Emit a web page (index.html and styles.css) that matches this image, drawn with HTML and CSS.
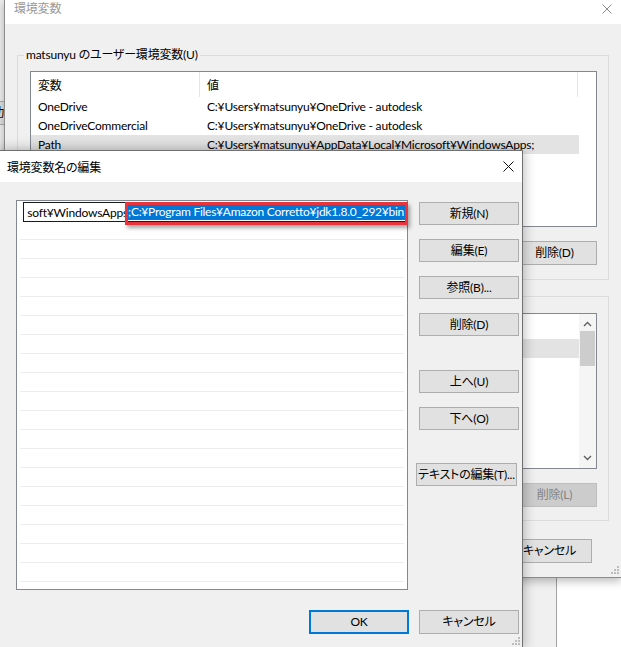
FILE: index.html
```html
<!DOCTYPE html>
<html lang="ja">
<head>
<meta charset="utf-8">
<title>環境変数名の編集</title>
<link rel="stylesheet" href="styles.css">
</head>
<body>
<div class="screen">
  <div class="behind">
    <div class="behind-btn">初功</div>
  </div>

  <div class="win envwin">
    <div class="titlebar inactive">
      <span class="title">環境変数</span>
      <svg class="close" width="10" height="10" viewBox="0 0 10 10"><path d="M0.5 0.5 L9.5 9.5 M9.5 0.5 L0.5 9.5" stroke="#8c8c8c" stroke-width="1" fill="none"/></svg>
    </div>
    <div class="envbody">
      <div class="group g1">
        <span class="legend">matsunyu のユーザー環境変数(U)</span>
        <div class="listview">
          <div class="lv-main">
            <div class="lv-head">
              <span class="c1">変数</span><span class="c2">値</span><span class="c3"></span>
            </div>
            <div class="lv-row"><span class="c1">OneDrive</span><span class="c2">C:¥Users¥matsunyu¥OneDrive - autodesk</span></div>
            <div class="lv-row"><span class="c1">OneDriveCommercial</span><span class="c2">C:¥Users¥matsunyu¥OneDrive - autodesk</span></div>
            <div class="lv-row sel"><span class="c1">Path</span><span class="c2">C:¥Users¥matsunyu¥AppData¥Local¥Microsoft¥WindowsApps;</span></div>
            <div class="lv-row"><span class="c1">TEMP</span><span class="c2">C:¥Users¥matsunyu¥AppData¥Local¥Temp</span></div>
            <div class="lv-row"><span class="c1">TMP</span><span class="c2">C:¥Users¥matsunyu¥AppData¥Local¥Temp</span></div>
          </div>
        </div>
        <div class="btnrow">
          <button class="btn">新規(N)...</button>
          <button class="btn">編集(E)...</button>
          <button class="btn">削除(D)</button>
        </div>
      </div>

      <div class="group g2">
        <span class="legend">システム環境変数(S)</span>
        <div class="listview lv2">
          <div class="lv-main">
            <div class="lv-head">
              <span class="c1">変数</span><span class="c2">値</span>
            </div>
            <div class="lv-row sel"><span class="c1">ComSpec</span><span class="c2">C:¥WINDOWS¥system32¥cmd.exe</span></div>
            <div class="lv-row"><span class="c1">DriverData</span><span class="c2">C:¥Windows¥System32¥Drivers¥DriverData</span></div>
          </div>
          <div class="vscroll">
            <svg class="arrow" width="9" height="6" viewBox="0 0 9 6"><path d="M1 5 L4.5 1.5 L8 5" stroke="#606060" stroke-width="1.4" fill="none"/></svg>
            <div class="track"><div class="thumb"></div></div>
            <svg class="arrow" width="9" height="6" viewBox="0 0 9 6"><path d="M1 1 L4.5 4.5 L8 1" stroke="#606060" stroke-width="1.4" fill="none"/></svg>
          </div>
        </div>
        <div class="btnrow">
          <button class="btn">新規(W)...</button>
          <button class="btn">編集(I)...</button>
          <button class="btn disabled">削除(L)</button>
        </div>
      </div>

      <div class="envfooter">
        <button class="btn">OK</button>
        <button class="btn">キャンセル</button>
      </div>
    </div>
    <svg class="grip" width="9" height="9" viewBox="0 0 9 9" fill="#bdbdbd"><rect x="7" y="1" width="2" height="2"/><rect x="4" y="4" width="2" height="2"/><rect x="7" y="4" width="2" height="2"/><rect x="1" y="7" width="2" height="2"/><rect x="4" y="7" width="2" height="2"/><rect x="7" y="7" width="2" height="2"/></svg>
  </div>

  <div class="win editwin">
    <div class="titlebar">
      <span class="title">環境変数名の編集</span>
      <svg class="close" width="11" height="11" viewBox="0 0 11 11"><path d="M0.5 0.5 L10.5 10.5 M10.5 0.5 L0.5 10.5" stroke="#111" stroke-width="1" fill="none"/></svg>
    </div>
    <div class="editbody">
      <div class="editmain">
        <div class="editlist">
          <div class="rows">
            <div class="erow first">
              <div class="editbox">
                <span class="pre"><span>soft¥WindowsApps</span></span><span class="selected">;C:¥Program Files¥Amazon Corretto¥jdk1.8.0_292¥bin</span>
              </div>
            </div>
            <div class="erow"></div><div class="erow"></div><div class="erow"></div><div class="erow"></div>
            <div class="erow"></div><div class="erow"></div><div class="erow"></div><div class="erow"></div>
            <div class="erow"></div><div class="erow"></div><div class="erow"></div><div class="erow"></div>
            <div class="erow"></div><div class="erow"></div><div class="erow"></div><div class="erow"></div>
            <div class="erow"></div><div class="erow"></div><div class="erow"></div><div class="erow"></div>
          </div>
          <div class="highlight"></div>
        </div>
        <div class="sidebtns">
          <button class="btn">新規(N)</button>
          <button class="btn">編集(E)</button>
          <button class="btn">参照(B)...</button>
          <button class="btn">削除(D)</button>
          <button class="btn gap-big">上へ(U)</button>
          <button class="btn">下へ(O)</button>
          <button class="btn gap-big wide">テキストの編集(T)...</button>
        </div>
      </div>
      <div class="editfooter">
        <button class="btn default">OK</button>
        <button class="btn">キャンセル</button>
      </div>
    </div>
    <svg class="grip" width="9" height="9" viewBox="0 0 9 9" fill="#bdbdbd"><rect x="7" y="1" width="2" height="2"/><rect x="4" y="4" width="2" height="2"/><rect x="7" y="4" width="2" height="2"/><rect x="1" y="7" width="2" height="2"/><rect x="4" y="7" width="2" height="2"/><rect x="7" y="7" width="2" height="2"/></svg>
  </div>
</div>
</body>
</html>
```

FILE: styles.css
```css
* { box-sizing: border-box; }
html, body { margin: 0; padding: 0; }
body {
  width: 621px;
  height: 647px;
  overflow: hidden;
  background: #fff;
  font-family: Lato, "Noto Sans CJK JP", sans-serif;
  font-feature-settings: "palt" 1;
  font-size: 12px;
  letter-spacing: -0.2px;
  color: #000;
}
.screen {
  position: relative;
  width: 621px;
  height: 647px;
  overflow: hidden;
  background: #fff;
}

/* window far behind */
.behind {
  position: absolute;
  left: -60px;
  top: -10px;
  width: 617px;
  height: 700px;
  background: #f0f0f0;
  border-right: 1px solid #a3a3a3;
  padding: 111px 0 0 20px;
}
.behind-btn {
  width: 45px;
  height: 24px;
  border: 1px solid #adadad;
  background: #e1e1e1;
  text-align: right;
  line-height: 22px;
  white-space: nowrap;
  overflow: hidden;
  margin-right: -4px;
  direction: rtl;
}

/* generic window */
.win {
  position: absolute;
  display: flex;
  flex-direction: column;
  background: #f0f0f0;
}
.titlebar {
  display: flex;
  align-items: center;
  justify-content: space-between;
  background: #fff;
  flex: none;
}
.titlebar .title { white-space: nowrap; }
.titlebar.inactive .title { color: #9a9a9a; }

.btn {
  font: inherit;
  font-feature-settings: "palt" 1;
  letter-spacing: -0.2px;
  color: #000;
  background: #e1e1e1;
  border: 1px solid #adadad;
  border-radius: 0;
  padding: 0;
  margin: 0;
  text-align: center;
  white-space: nowrap;
  line-height: 1;
}
.btn.disabled {
  background: #cccccc;
  border-color: #bfbfbf;
  color: #838383;
}

.grip {
  position: absolute;
  right: 2px;
  bottom: 3px;
}

/* background: 環境変数 */
.envwin {
  left: 4px;
  top: -1px;
  width: 618px;
  height: 579px;
  border: 1px solid #8c8c8c;
  box-shadow: 0 3px 9px rgba(0, 0, 0, 0.28);
}
.envwin .titlebar {
  height: 24px;
  padding: 0 9px 6px 9px;
  line-height: 14px;
}
.envbody {
  display: flex;
  flex-direction: column;
  padding: 31px 12px 0 12px;
}
.group {
  display: flex;
  flex-direction: column;
  border: 1px solid #dcdcdc;
  padding: 0 11px 14px 12px;
}
.group.g2 { margin-top: 16px; padding-bottom: 13px; }
.legend {
  align-self: flex-start;
  margin: -9px 0 0 -6px;
  padding: 0 2px;
  height: 16px;
  line-height: 16px;
  background: #f0f0f0;
  white-space: nowrap;
}
.listview {
  margin-top: 8px;
  height: 156px;
  border: 1px solid #828790;
  background: #fff;
  display: flex;
  overflow: hidden;
}
.g2 .listview { margin-top: 9px; }
.lv-main { flex: 1; min-width: 0; }
.lv-head {
  display: flex;
  height: 25px;
  align-items: stretch;
}
.lv-head span {
  display: flex;
  align-items: center;
  padding-left: 7px;
}
.lv-head .c1 { width: 169px; border-right: 1px solid #e5e5e5; }
.lv-head .c2 { width: 378px; border-right: 1px solid #e5e5e5; }
.lv-head .c3 { flex: 1; }
.lv-row {
  display: flex;
  align-items: center;
  height: 19px;
  width: 548px;
  white-space: nowrap;
}
.lv-row .c1 { width: 169px; padding-left: 7px; flex: none; }
.lv-row .c2 { padding-left: 7px; }
.lv-row.sel { background: #e3e3e3; }
.lv2 .lv-row { width: auto; }
.lv2 .lv-head .c2 { flex: 1; width: auto; border-right: none; }

.vscroll {
  width: 17px;
  flex: none;
  display: flex;
  flex-direction: column;
  align-items: center;
  background: #f5f5f5;
  padding: 7px 0 7px;
}
.vscroll .track {
  flex: 1;
  width: 100%;
  padding-top: 4px;
}
.vscroll .thumb {
  height: 35px;
  background: #cdcdcd;
  margin: 0 1px;
}

.btnrow {
  display: flex;
  justify-content: flex-end;
  gap: 10px;
  margin-top: 14px;
}
.btnrow .btn { width: 85px; height: 24px; }
.envfooter {
  display: flex;
  justify-content: flex-end;
  gap: 10px;
  margin-top: 18px;
  padding-right: 17px;
}
.envfooter .btn { width: 85px; height: 24px; }

/* foreground: 環境変数名の編集 */
.editwin {
  left: -1px;
  top: 150px;
  width: 524px;
  height: 499px;
  border: 1px solid #707070;
  box-shadow: 0 0 12px rgba(0, 0, 0, 0.32);
}
.editwin .titlebar {
  height: 31px;
  padding: 0 8px 0 7px;
}
.editbody {
  padding: 18px 3px 0 16px;
  display: flex;
  flex-direction: column;
}
.editmain {
  display: flex;
  gap: 11px;
  align-items: flex-start;
}
.editlist {
  position: relative;
  width: 392px;
  height: 390px;
  border: 1px solid #828790;
  background: #fff;
  flex: none;
}
.rows {
  height: 100%;
  overflow: hidden;
  padding-top: 1px;
}
.erow {
  height: 19px;
  margin: 0 3px;
  border-bottom: 1px solid #ececec;
}
.erow.first {
  border-bottom-color: #fff;
  padding-left: 3px;
}
.editbox {
  height: 20px;
  width: 384px;
  border: 1px solid #1a1a1a;
  background: #fff;
  display: flex;
  align-items: center;
  overflow: hidden;
  white-space: nowrap;
  padding-left: 1px;
}
.editbox .pre {
  display: flex;
  justify-content: flex-end;
  width: 103px;
  overflow: hidden;
  flex: none;
}
.editbox .selected {
  background: #0078d7;
  color: #fff;
  line-height: 16px;
  letter-spacing: -0.26px;
  padding-right: 2px;
  flex: none;
}
.highlight {
  position: absolute;
  left: 108px;
  top: 1px;
  width: 283px;
  height: 23px;
  border: 3px solid #e8343c;
  box-shadow: 2px 3px 4px rgba(0, 0, 0, 0.35);
}
.sidebtns {
  width: 100px;
  flex: none;
  display: flex;
  flex-direction: column;
  gap: 14px;
  padding-top: 2px;
}
.sidebtns .btn { height: 23px; width: 100px; }
.sidebtns .gap-big { margin-top: 20px; }
.sidebtns .btn.wide { width: 101px; margin-left: -3px; margin-top: 19px; }
.editfooter {
  display: flex;
  justify-content: flex-end;
  gap: 10px;
  margin-top: 20px;
}
.editfooter .btn { width: 100px; height: 24px; }
.editfooter .btn.default { border: 2px solid #0078d7; }
```
